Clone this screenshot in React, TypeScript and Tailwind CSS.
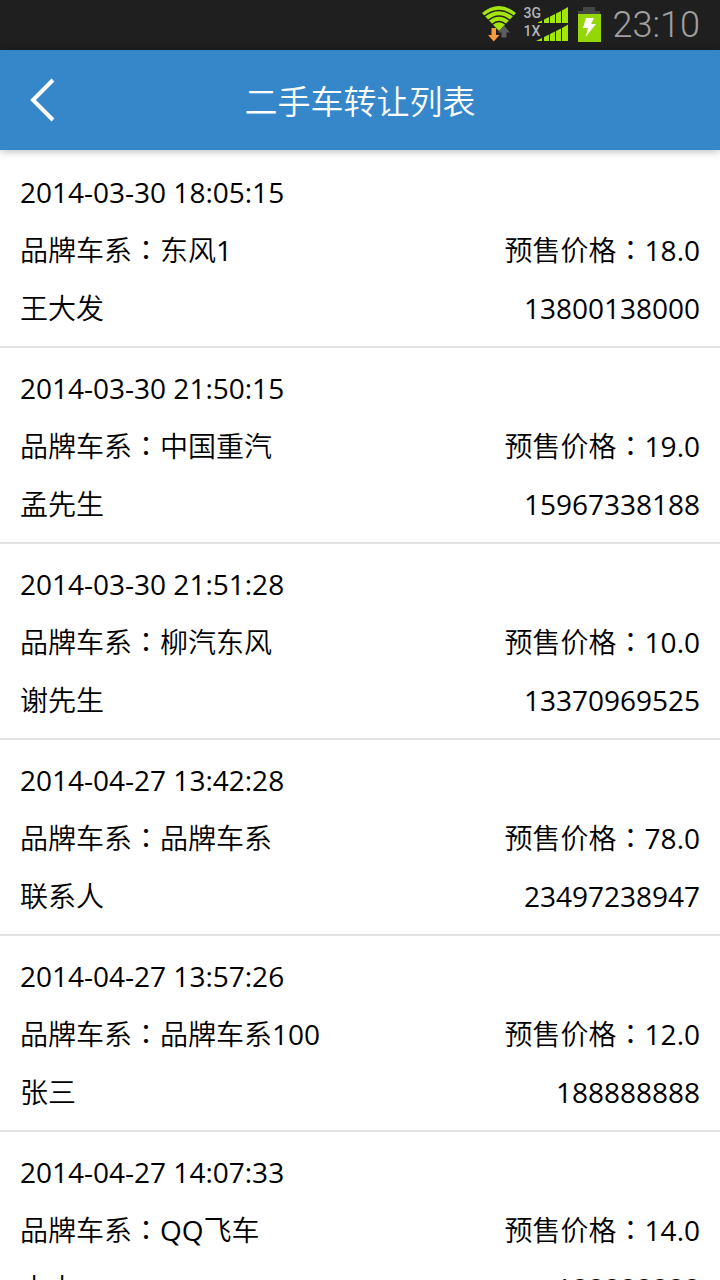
type Listing = {
  time: string;
  series: string;
  price: string;
  contact: string;
  phone: string;
};

const listings: Listing[] = [
  { time: "2014-03-30 18:05:15", series: "东风1", price: "18.0", contact: "王大发", phone: "13800138000" },
  { time: "2014-03-30 21:50:15", series: "中国重汽", price: "19.0", contact: "孟先生", phone: "15967338188" },
  { time: "2014-03-30 21:51:28", series: "柳汽东风", price: "10.0", contact: "谢先生", phone: "13370969525" },
  { time: "2014-04-27 13:42:28", series: "品牌车系", price: "78.0", contact: "联系人", phone: "23497238947" },
  { time: "2014-04-27 13:57:26", series: "品牌车系100", price: "12.0", contact: "张三", phone: "188888888" },
  { time: "2014-04-27 14:07:33", series: "QQ飞车", price: "14.0", contact: "小小", phone: "188888888" },
];

function WifiIcon() {
  return (
    <svg width="34" height="38" viewBox="0 0 34 38" aria-hidden="true">
      <path d="M0 7 Q17 -7 34 7 L17 25 Z" fill="#a4e60b" />
      <g fill="none" stroke="#1f1f1f" strokeWidth="1.4">
        <path d="M2 10.500 Q17 -1.500 32 10.500" />
        <path d="M6 14.500 Q17 5.500 28 14.500" />
        <path d="M10 18.500 Q17 12.500 24 18.500" />
      </g>
      <path d="M9.500 22h4.500v7h3.500l-5.700 6.500L6 29h3.500z" fill="#fb9a3c" />
      <path d="M19.500 31.500h5v-5h3.500l-6-7-6 7h3.500z" fill="#5b5d60" />
    </svg>
  );
}

function SignalIcon() {
  return (
    <svg width="33" height="36" viewBox="0 0 33 36" fill="#a4e60b" aria-hidden="true">
      <path d="M2 15.500l4-2v2.500H2zM8 12.500l5-2.500v6H8zM14 9.500l5-2.500v9h-5zM20 6.500l5-2.500v12h-5zM26 3.500l6-3.500v16h-6z" />
      <path d="M0 34l6-3v3H0zM8 30l5-2.500V34H8zM14 27l5-2.500V34h-5zM20 24l5-2.500V34h-5zM26 21l6-3.500V34h-6z" />
    </svg>
  );
}

function BatteryIcon() {
  return (
    <svg width="24" height="36" viewBox="0 0 24 36" aria-hidden="true">
      <path d="M6 0h12v4h5v3H1V4h5z" fill="#454545" />
      <path d="M1 7h23v28H1z" fill="#95d605" />
      <path d="M9 11h8l-3 6h5L8.500 30l2.500-9H6z" fill="#fff" />
    </svg>
  );
}

function StatusBar() {
  return (
    <div className="flex h-[50px] shrink-0 items-center justify-end bg-[#1f1f1f] pr-5 font-['Roboto',sans-serif]">
      <WifiIcon />
      <div className="ml-2 flex w-3 flex-col pb-1.5 text-sm leading-[18px] font-medium text-[#b4b4b4]">
        <span>3G</span>
        <span>1X</span>
      </div>
      <SignalIcon />
      <span className="ml-2">
        <BatteryIcon />
      </span>
      <time className="ml-3 text-[36px] leading-[50px] font-light text-[#a0a0a0]">23:10</time>
    </div>
  );
}

function Field({ label, value }: { label: string; value: string }) {
  return (
    <span>
      {label}
      <span lang="zh-TW" className="font-['Noto_Sans_CJK_TC_DemiLight','Noto_Sans_CJK_TC',sans-serif] leading-none">：</span>
      {value}
    </span>
  );
}

function ListingRow({ listing }: { listing: Listing }) {
  return (
    <li className="flex flex-col gap-[22px] border-b-2 border-[#e2e2e2] px-5 pt-[22px] pb-5">
      <time className="h-9">{listing.time}</time>
      <div className="flex h-9 justify-between">
        <Field label="品牌车系" value={listing.series} />
        <Field label="预售价格" value={listing.price} />
      </div>
      <div className="flex h-9 justify-between">
        <span>{listing.contact}</span>
        <span>{listing.phone}</span>
      </div>
    </li>
  );
}

export default function App() {
  return (
    <div className="flex h-screen flex-col overflow-hidden bg-white font-['Open_Sans','Noto_Sans_CJK_SC_DemiLight','Noto_Sans_CJK_SC',sans-serif]" lang="zh-CN">
      <StatusBar />
      <header className="z-10 grid h-[100px] shrink-0 grid-cols-[84px_1fr_84px] items-center bg-[#3686ca] text-white shadow-[0_1px_8px_rgba(0,0,0,0.3)]">
        <button type="button" aria-label="返回" className="flex h-full items-center pl-[28px]">
          <svg width="28" height="48" viewBox="0 0 28 48" fill="none" stroke="currentColor" strokeWidth="4" aria-hidden="true">
            <path d="M25 4L5 24l20 20" />
          </svg>
        </button>
        <h1 className="pt-1 text-center text-[33px] leading-[48px] font-normal">二手车转让列表</h1>
      </header>
      <main className="min-h-0 flex-1 overflow-y-auto [scrollbar-width:none]">
        <ul className="pt-0.5 text-[28px] leading-9 font-normal text-black">
          {listings.map((listing) => (
            <ListingRow key={listing.time} listing={listing} />
          ))}
        </ul>
      </main>
    </div>
  );
}
